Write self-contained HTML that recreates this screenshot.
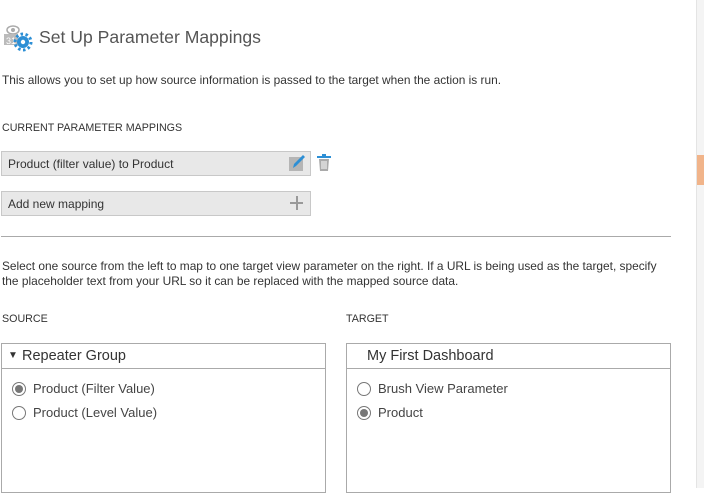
<!DOCTYPE html>
<html><head><style>
body{margin:0;width:704px;height:488px;overflow:hidden;background:#fff;font-family:"Liberation Sans",sans-serif;color:#333;position:relative}
.a{position:absolute;white-space:nowrap}
.t{font-size:12px}
.box{position:absolute;background:#e8e8e8;border:1px solid #c8c8c8;box-sizing:border-box}
.rad{position:absolute;width:14px;height:14px;border:1px solid #777;border-radius:50%;box-sizing:border-box;background:#fff}
.rad.on::after{content:"";position:absolute;left:2px;top:2px;width:8px;height:8px;border-radius:50%;background:#777}
.pan{position:absolute;border:1px solid #aaa;box-sizing:border-box}
.ph{height:24px;border-bottom:1px solid #aaa;font-size:14.5px;line-height:24px;padding-left:20px;color:#333}
.rl{font-size:13px;color:#444}
</style></head><body>
<div class="a" style="left:696px;top:0;width:8px;height:488px;background:#f4f4f4;border-left:1px solid #e4e4e4"></div>
<div class="a" style="left:697px;top:155px;width:7px;height:30px;background:#f1b48a"></div>
<svg class="a" style="left:2px;top:24px" width="34" height="28" viewBox="0 0 34 28">
<ellipse cx="11" cy="6" rx="6" ry="4" fill="none" stroke="#aaa" stroke-width="1.5"/><circle cx="11" cy="6" r="2" fill="#aaa"/>
<rect x="2" y="10" width="14" height="11" fill="#bbb"/><text x="4" y="20" font-size="9" fill="#fff" font-family="Liberation Sans">31</text>
<circle cx="21" cy="18" r="6" fill="#2d8fd5"/><circle cx="21" cy="18" r="8" fill="none" stroke="#2d8fd5" stroke-width="3" stroke-dasharray="2.5 2.5"/><circle cx="21" cy="18" r="2.2" fill="#fff"/>
</svg>
<div class="a" style="left:39px;top:27px;font-size:17.6px;color:#555">Set Up Parameter Mappings</div>
<div class="a" style="left:2px;top:73px;font-size:11.9px">This allows you to set up how source information is passed to the target when the action is run.</div>
<div class="a" style="left:2px;top:122px;font-size:10.7px">CURRENT PARAMETER MAPPINGS</div>
<div class="box" style="left:1px;top:151px;width:310px;height:25px"></div>
<div class="a t" style="left:8px;top:157px">Product (filter value) to Product</div>
<svg class="a" style="left:288px;top:154px" width="18" height="18"><rect x="1" y="3" width="14" height="14" fill="#b5b5b5"/><path d="M5 14 L6 10 L15 1 L17 3 L8 12 Z" fill="#2d8fd5"/></svg>
<svg class="a" style="left:316px;top:154px" width="16" height="18"><rect x="1" y="2" width="14" height="2" fill="#2d8fd5"/><rect x="6" y="0" width="4" height="2" fill="#2d8fd5"/><path d="M3 5 H13 L12 17 H4 Z" fill="#aaa"/><path d="M6 7V15M8 7V15M10 7V15" stroke="#fff" stroke-width="1"/></svg>
<div class="box" style="left:1px;top:191px;width:310px;height:25px"></div>
<div class="a t" style="left:8px;top:197px">Add new mapping</div>
<div class="a" style="left:290px;top:202px;width:13px;height:2px;background:#999"></div>
<div class="a" style="left:296px;top:196px;width:2px;height:14px;background:#999"></div>
<div class="a" style="left:1px;top:236px;width:670px;height:1px;background:#aaa"></div>
<div class="a" style="left:2px;top:259px;font-size:11.9px;line-height:15px">Select one source from the left to map to one target view parameter on the right. If a URL is being used as the target, specify<br>the placeholder text from your URL so it can be replaced with the mapped source data.</div>
<div class="a" style="left:2px;top:313px;font-size:10.7px">SOURCE</div>
<div class="a" style="left:346px;top:313px;font-size:10.7px">TARGET</div>
<div class="pan" style="left:1px;top:343px;width:325px;height:150px"><div class="ph"><span style="position:absolute;left:6px;top:0;font-size:10px">▼</span>Repeater Group</div></div>
<div class="rad on" style="left:12px;top:382px"></div><div class="a rl" style="left:33px;top:381px">Product (Filter Value)</div>
<div class="rad" style="left:12px;top:406px"></div><div class="a rl" style="left:33px;top:405px">Product (Level Value)</div>
<div class="pan" style="left:346px;top:343px;width:325px;height:150px"><div class="ph">My First Dashboard</div></div>
<div class="rad" style="left:357px;top:382px"></div><div class="a rl" style="left:378px;top:381px">Brush View Parameter</div>
<div class="rad on" style="left:357px;top:406px"></div><div class="a rl" style="left:378px;top:405px">Product</div>
</body></html>
